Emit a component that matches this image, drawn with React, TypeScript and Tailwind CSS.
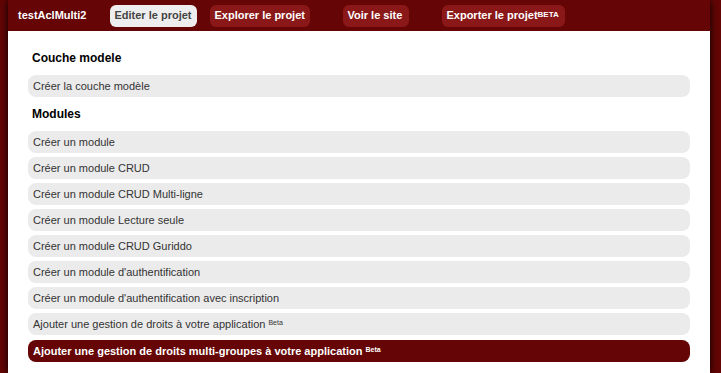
import React from "react";

const rows = [
  "Créer un module",
  "Créer un module CRUD",
  "Créer un module CRUD Multi-ligne",
  "Créer un module Lecture seule",
  "Créer un module CRUD Guriddo",
  "Créer un module d'authentification",
  "Créer un module d'authentification avec inscription",
];

function Row({ children, active = false }: { children: React.ReactNode; active?: boolean }) {
  return (
    <div
      className={
        "h-[22px] rounded-[8px] pl-[5px] flex items-center text-[11px] leading-[13px] " +
        (active ? "bg-[#650505] text-white font-bold" : "bg-[#ebebeb] text-[#333]")
      }
    >
      {children}
    </div>
  );
}

export default function App() {
  return (
    <div className="min-h-screen bg-[#650505] pl-[8px]" style={{ fontFamily: '"Liberation Sans", Arial, sans-serif' }}>
      <div className="min-h-screen w-[702px] bg-white shadow-[0_0_8px_#000] flex flex-col">
        <div className="h-[31px] bg-[#650505] flex items-center pl-[10px] text-[11px] font-bold text-white">
          <span className="mr-[24px]">testAclMulti2</span>
          <span className="h-[22px] w-[87px] flex items-center pl-[4px] rounded-[6px] bg-[#eeeeee] text-[#444] mr-[13px]">Editer le projet</span>
          <span className="h-[22px] w-[100px] flex items-center pl-[4px] rounded-[6px] bg-[#8a1818] mr-[33px]">Explorer le projet</span>
          <span className="h-[22px] w-[66px] flex items-center pl-[4px] rounded-[6px] bg-[#8a1818] mr-[33px]">Voir le site</span>
          <span className="h-[22px] w-[123px] flex items-center pl-[4px] rounded-[6px] bg-[#8a1818]">
            Exporter le projet<sup className="text-[8px] relative -top-[1px]">BETA</sup>
          </span>
        </div>
        <div className="px-[20px] pt-[10px] flex flex-col">
          <div className="pl-[4px] my-[9px] text-[12px] leading-[16px] font-bold text-black">Couche modele</div>
          <Row>Créer la couche modèle</Row>
          <div className="pl-[4px] my-[9px] text-[12px] leading-[16px] font-bold text-black">Modules</div>
          <div className="flex flex-col gap-[4px]">
            {rows.map((r) => (
              <Row key={r}>{r}</Row>
            ))}
            <Row>
              Ajouter une gestion de droits à votre application&nbsp;<sup className="text-[7px] relative -top-[1px]">Beta</sup>
            </Row>
            <div className="mt-[1px]">
              <Row active>
                Ajouter une gestion de droits multi-groupes à votre application&nbsp;<sup className="text-[7px] relative -top-[1px]">Beta</sup>
              </Row>
            </div>
          </div>
        </div>
      </div>
    </div>
  );
}
